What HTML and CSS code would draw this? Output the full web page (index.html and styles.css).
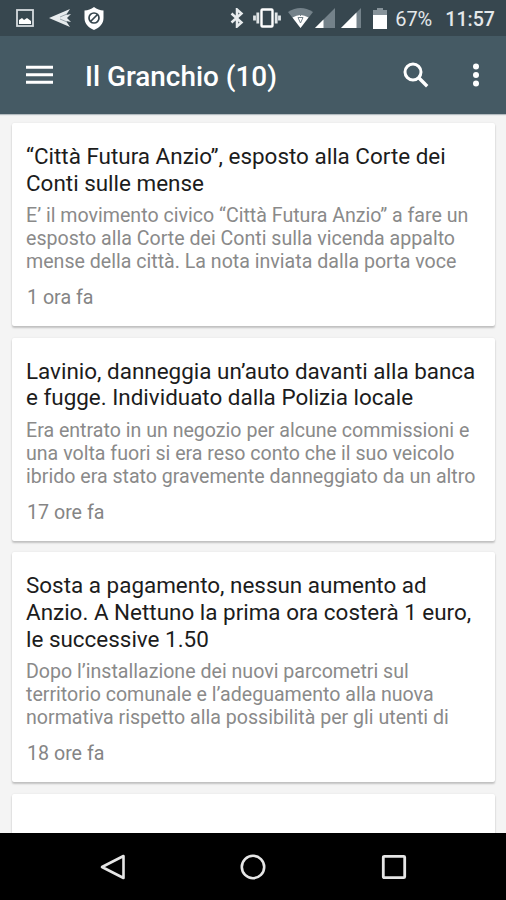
FILE: index.html
```html
<!DOCTYPE html>
<html lang="it">
<head>
    <meta charset="UTF-8">
    <meta name="viewport" content="width=device-width, initial-scale=1.0">
    <title>Il Granchio</title>
    <link rel="stylesheet" href="styles.css">
</head>
<body>
    <div class="status-bar">
        <div class="notifications">
            <svg class="icon-picture" width="18" height="18" viewBox="0 0 18 18">
                <rect x="1" y="1" width="16" height="16" fill="none" stroke="#d5dbde" stroke-width="1.8"/>
                <path d="M3 15v-4l3-2 2 2 3-2 4 3v3z" fill="#fff"/>
            </svg>
            <svg class="icon-plane" width="22" height="18" viewBox="0 0 22 18">
                <path d="M0 9L21 0l-4 6 5-1-4 4 4 4-5-1 4 6z" fill="#e8ecee"/>
                <path d="M11 8l7-3M11 10l7 3" stroke="#9aa6ac" stroke-width="1"/>
            </svg>
            <svg class="icon-shield" width="20" height="23" viewBox="0 0 20 23">
                <path d="M10 0c3 2.500 6 3.300 9.500 3.500V11c0 6-4 9.500-9.500 12C4.500 20.500.5 17 .5 11V3.500C4 3.300 7 2.500 10 0z" fill="#fff"/>
                <circle cx="10" cy="11" r="5" fill="none" stroke="#37474f" stroke-width="1.700"/>
                <path d="M6.500 14.500l7-7" stroke="#37474f" stroke-width="1.700"/>
            </svg>
        </div>
        <div class="system">
            <svg class="icon-bluetooth" width="14" height="20" viewBox="0 0 14 20">
                <path d="M1.500 5.500l10 9L7 18.500v-17l4.500 4-10 9" fill="none" stroke="#e8ecee" stroke-width="2.500"/>
            </svg>
            <svg class="icon-vibrate" width="28" height="20" viewBox="0 0 28 20">
                <rect x="8.500" y="1.500" width="11" height="17" rx="1" fill="none" stroke="#fff" stroke-width="2.400"/>
                <path d="M4.800 4.500v11M23.200 4.500v11M1.500 7.500v5M26.500 7.500v5" stroke="#e0e5e7" stroke-width="2.800"/>
            </svg>
            <svg class="icon-wifi" width="25" height="20" viewBox="0 0 25 20">
                <path d="M0 4Q12.500-4 25 4L12.500 20z" fill="#74828a"/>
                <path d="M4.500 9.500q8-5 16 0L12.500 20z" fill="#fff"/>
                <path d="M12.500 4v4M10 9.500h5l-2.500 5.500z" fill="none" stroke="#74828a"/>
            </svg>
            <svg class="icon-signal" width="20" height="20" viewBox="0 0 20 20">
                <path d="M0 20L20 0v20z" fill="#74828a"/>
                <path d="M0 20l8.500-8.500V20z" fill="#fff"/>
            </svg>
            <svg class="icon-signal" width="20" height="20" viewBox="0 0 20 20">
                <path d="M0 20L20 0v20z" fill="#74828a"/>
                <path d="M0 20L15.500 4.500V20z" fill="#fff"/>
            </svg>
            <svg class="icon-battery" width="14" height="21" viewBox="0 0 14 21">
                <path d="M0 2h4V0h6v2h4v6H0z" fill="#87939a"/>
                <path d="M0 7h14v14H0z" fill="#fff"/>
            </svg>
            <span class="battery-level">67%</span>
            <span class="clock">11:57</span>
        </div>
    </div>

    <div class="toolbar">
        <svg class="menu" width="27" height="20" viewBox="0 0 27 20">
            <path d="M0 2.200h27M0 9.700h27M0 17.200h27" stroke="#fff" stroke-width="3"/>
        </svg>
        <h1>Il Granchio (10)</h1>
        <svg class="search" width="26" height="26" viewBox="0 0 26 26">
            <circle cx="10" cy="10" r="8" fill="none" stroke="#fff" stroke-width="3"/>
            <path d="M15.500 15.500l8.700 8.700" stroke="#fff" stroke-width="3.400"/>
        </svg>
        <svg class="more" width="8" height="24" viewBox="0 0 8 24">
            <circle cx="4" cy="3.500" r="3" fill="#fff"/>
            <circle cx="4" cy="12" r="3" fill="#fff"/>
            <circle cx="4" cy="20.500" r="3" fill="#fff"/>
        </svg>
    </div>

    <div class="news">
        <div class="card">
            <h2>“Città Futura Anzio”, esposto alla Corte dei<br>Conti sulle mense</h2>
            <p>E’ il movimento civico “Città Futura Anzio” a fare un<br>esposto alla Corte dei Conti sulla vicenda appalto<br>mense della città. La nota inviata dalla porta voce</p>
            <div class="time">1 ora fa</div>
        </div>
        <div class="card">
            <h2>Lavinio, danneggia un’auto davanti alla banca<br>e fugge. Individuato dalla Polizia locale</h2>
            <p>Era entrato in un negozio per alcune commissioni e<br>una volta fuori si era reso conto che il suo veicolo<br>ibrido era stato gravemente danneggiato da un altro</p>
            <div class="time">17 ore fa</div>
        </div>
        <div class="card">
            <h2>Sosta a pagamento, nessun aumento ad<br>Anzio. A Nettuno la prima ora costerà 1 euro,<br>le successive 1.50</h2>
            <p>Dopo l’installazione dei nuovi parcometri sul<br>territorio comunale e l’adeguamento alla nuova<br>normativa rispetto alla possibilità per gli utenti di</p>
            <div class="time">18 ore fa</div>
        </div>
        <div class="card card-next"></div>
    </div>

    <div class="nav-bar">
        <svg width="26" height="26" viewBox="0 0 26 26">
            <path d="M2 13L23.500 2v22z" fill="none" stroke="#e6e6e6" stroke-width="2.600" stroke-linejoin="round"/>
        </svg>
        <svg width="26" height="26" viewBox="0 0 26 26">
            <circle cx="13" cy="13" r="11.200" fill="none" stroke="#e6e6e6" stroke-width="2.600"/>
        </svg>
        <svg width="26" height="26" viewBox="0 0 26 26">
            <rect x="2.300" y="2.300" width="21.400" height="21.400" rx="1" fill="none" stroke="#e6e6e6" stroke-width="2.800"/>
        </svg>
    </div>
</body>
</html>
```
FILE: styles.css
```css
body {
    margin: 0;
    height: 900px;
    display: flex;
    flex-direction: column;
    overflow: hidden;
    font-family: Roboto, "Liberation Sans", sans-serif;
    background: #f4f4f4;
}

svg {
    display: block;
    flex: none;
}

h1, h2, p {
    margin: 0;
    font-weight: 400;
}

.status-bar {
    flex: none;
    height: 36px;
    box-sizing: border-box;
    padding: 0 11px 0 16px;
    display: flex;
    justify-content: space-between;
    align-items: center;
    background: #37474f;
    color: #e4e8ea;
}

.notifications,
.system {
    display: flex;
    align-items: center;
}

.icon-plane {
    margin-left: 15px;
}

.icon-shield {
    margin-left: 13px;
}

.icon-vibrate {
    margin-left: 9px;
}

.icon-wifi {
    margin-left: 7px;
}

.icon-signal {
    margin-left: 2px;
}

.icon-signal + .icon-signal {
    margin-left: 6px;
}

.icon-battery {
    margin-left: 12px;
}

.battery-level {
    margin-left: 8px;
    padding-top: 2px;
    font-size: 20px;
    line-height: 36px;
}

.clock {
    margin-left: 13px;
    padding-top: 3px;
    font-size: 19.600px;
    font-weight: 500;
    line-height: 36px;
}

.toolbar {
    flex: none;
    height: 78px;
    box-sizing: border-box;
    padding: 0 26px 0 26px;
    display: flex;
    align-items: center;
    background: #455a64;
    box-shadow: 0 1px 1px #b4bcc0;
    color: #fff;
}

.toolbar h1 {
    flex: 1;
    margin-left: 32px;
    padding-top: 3px;
    font-size: 27.900px;
    font-weight: 500;
    line-height: 75px;
}

.more {
    margin-left: 43px;
}

.news {
    flex: 1;
    min-height: 0;
    overflow: hidden;
    padding: 9px 11px 0 12px;
}

.card {
    box-sizing: border-box;
    margin-bottom: 11.800px;
    padding: 20px 14px 16.600px;
    background: #fff;
    border-radius: 2px;
    box-shadow: 0 2px 2px rgba(0, 0, 0, 0.2), 0 0 2px rgba(0, 0, 0, 0.08);
    white-space: nowrap;
}

.card h2 {
    font-size: 22.450px;
    line-height: 26.700px;
    color: #1c1c1c;
}

.card p {
    margin-top: 7.900px;
    font-size: 19.600px;
    line-height: 23px;
    color: #8a8a8a;
}

.time {
    margin: 13px 0 0 1px;
    font-size: 19.650px;
    line-height: 23px;
    color: #858585;
}

.card-next {
    height: 80px;
}

.nav-bar {
    flex: none;
    height: 67px;
    display: flex;
    justify-content: center;
    align-items: center;
    gap: 114.500px;
    background: #000;
}
```
